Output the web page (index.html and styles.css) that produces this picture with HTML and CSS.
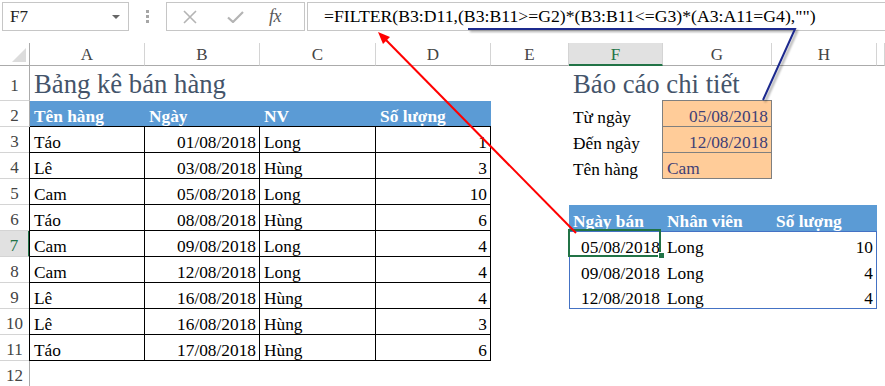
FILE: index.html
```html
<!DOCTYPE html>
<html lang="vi">
<head>
<meta charset="utf-8">
<title>FILTER</title>
<link rel="stylesheet" href="styles.css">
</head>
<body>
<div class="app">
  <div class="fbar">
    <div class="namebox"><span>F7</span><span class="caret"></span></div>
    <div class="dots"><i></i><i></i><i></i></div>
    <div class="fxbox">
      <svg class="ic-x" width="14" height="14" viewBox="0 0 14 14"><path d="M1 1L13 13M13 1L1 13" stroke="#b4b4b4" stroke-width="1.6" fill="none"/></svg>
      <svg class="ic-ok" width="17" height="12" viewBox="0 0 17 12"><path d="M1 6.5L6 11L16 1" stroke="#b4b4b4" stroke-width="2.2" fill="none"/></svg>
      <span class="fx">fx</span>
    </div>
    <div class="finput">=FILTER(B3:D11,(B3:B11&gt;=G2)*(B3:B11&lt;=G3)*(A3:A11=G4),"")</div>
  </div>
  <div class="sheet">
    <div class="ch corner"></div><div class="ch">A</div><div class="ch">B</div><div class="ch">C</div><div class="ch">D</div><div class="ch">E</div><div class="ch sel">F</div><div class="ch">G</div><div class="ch">H</div><div class="ch"></div>

    <div class="rh">1</div><div class="c title">Bảng kê bán hàng</div><div class="c"></div><div class="c"></div><div class="c"></div><div class="c"></div><div class="c title">Báo cáo chi tiết</div><div class="c"></div><div class="c"></div><div class="c"></div>

    <div class="rh">2</div><div class="c hd bb">Tên hàng</div><div class="c hd bb">Ngày</div><div class="c hd bb">NV</div><div class="c hd bb">Số lượng</div><div class="c"></div><div class="c">Từ ngày</div><div class="c inp top r">05/08/2018</div><div class="c"></div><div class="c"></div>

    <div class="rh">3</div><div class="c td first">Táo</div><div class="c td r">01/08/2018</div><div class="c td">Long</div><div class="c td r">1</div><div class="c"></div><div class="c">Đến ngày</div><div class="c inp r">12/08/2018</div><div class="c"></div><div class="c"></div>

    <div class="rh">4</div><div class="c td first">Lê</div><div class="c td r">03/08/2018</div><div class="c td">Hùng</div><div class="c td r">3</div><div class="c"></div><div class="c">Tên hàng</div><div class="c inp">Cam</div><div class="c"></div><div class="c"></div>

    <div class="rh">5</div><div class="c td first">Cam</div><div class="c td r">05/08/2018</div><div class="c td">Long</div><div class="c td r">10</div><div class="c"></div><div class="c"></div><div class="c"></div><div class="c"></div><div class="c"></div>

    <div class="rh">6</div><div class="c td first">Táo</div><div class="c td r">08/08/2018</div><div class="c td">Hùng</div><div class="c td r">6</div><div class="c"></div><div class="c hd">Ngày bán</div><div class="c hd">Nhân viên</div><div class="c hd">Số lượng</div><div class="c"></div>

    <div class="rh sel">7</div><div class="c td first">Cam</div><div class="c td r">09/08/2018</div><div class="c td">Long</div><div class="c td r">4</div><div class="c"></div><div class="c ob-t ob-l r">05/08/2018</div><div class="c ob-t">Long</div><div class="c ob-t ob-r r">10</div><div class="c"></div>

    <div class="rh">8</div><div class="c td first">Cam</div><div class="c td r">12/08/2018</div><div class="c td">Long</div><div class="c td r">4</div><div class="c"></div><div class="c ob-l r">09/08/2018</div><div class="c">Long</div><div class="c ob-r r">4</div><div class="c"></div>

    <div class="rh">9</div><div class="c td first">Lê</div><div class="c td r">16/08/2018</div><div class="c td">Hùng</div><div class="c td r">4</div><div class="c"></div><div class="c ob-l ob-b r">12/08/2018</div><div class="c ob-b">Long</div><div class="c ob-b ob-r r">4</div><div class="c"></div>

    <div class="rh">10</div><div class="c td first">Lê</div><div class="c td r">16/08/2018</div><div class="c td">Hùng</div><div class="c td r">3</div><div class="c"></div><div class="c"></div><div class="c"></div><div class="c"></div><div class="c"></div>

    <div class="rh">11</div><div class="c td first">Táo</div><div class="c td r">17/08/2018</div><div class="c td">Hùng</div><div class="c td r">6</div><div class="c"></div><div class="c"></div><div class="c"></div><div class="c"></div><div class="c"></div>

    <div class="rh">12</div><div class="c"></div><div class="c"></div><div class="c"></div><div class="c"></div><div class="c"></div><div class="c"></div><div class="c"></div><div class="c"></div><div class="c"></div>
  </div>

  <div class="selbox"></div>
  <div class="handle"></div>

  <svg class="arrows" width="885" height="386" viewBox="0 0 885 386">
    <defs>
      <filter id="sh" x="-10%" y="-10%" width="120%" height="130%">
        <feDropShadow dx="2" dy="2" stdDeviation="1.2" flood-color="#000" flood-opacity="0.35"/>
      </filter>
    </defs>
    <polyline points="468,29 795,29 763,100" fill="none" stroke="#1f2a8e" stroke-width="2" filter="url(#sh)"/>
    <line x1="576" y1="233" x2="385" y2="39" stroke="#ff0000" stroke-width="2"/>
    <polygon points="378,32 390,37 383,44" fill="#ff0000"/>
  </svg>
</div>
</body>
</html>
```
FILE: styles.css
```css
* { box-sizing: border-box; margin: 0; padding: 0; }
body {
  width: 885px; height: 386px; overflow: hidden; background: #fff;
  font-family: "Liberation Serif", Tinos, "Times New Roman", "DejaVu Serif", serif; color: #000;
}
.app { position: relative; width: 885px; height: 386px; font-family: "Liberation Serif", Tinos, "DejaVu Serif", serif; }

/* formula bar */
.fbar { height: 43px; display: flex; align-items: flex-start; padding-top: 2px; }
.namebox {
  margin-left: 2px; width: 127px; height: 29px; border: 1px solid #c6c6c6;
  display: flex; align-items: center; justify-content: space-between;
  padding: 0 8px 0 7px; font-size: 17px; color: #222;
}
.caret {
  width: 0; height: 0; border-left: 4px solid transparent;
  border-right: 4px solid transparent; border-top: 4px solid #666;
}
.dots { margin-left: 17px; margin-top: 8px; width: 3px; display: flex; flex-direction: column; gap: 2px; }
.dots i { display: block; width: 3px; height: 3px; background: #a6a6a6; }
.fxbox {
  margin-left: 17px; width: 139px; height: 29px; border: 1px solid #c6c6c6;
  display: flex; align-items: center; padding-left: 16px;
}
.ic-ok { margin-left: 30px; }
.fx { margin-left: 25px; font-style: italic; font-size: 18px; color: #595959; letter-spacing: -0.5px; }
.finput {
  margin-left: 2px; flex: 1; height: 29px; border: 1px solid #c6c6c6; border-right: none;
  padding-left: 16px; font-size: 17.7px; display: flex; align-items: center; white-space: nowrap;
}

/* sheet */
.sheet {
  display: grid;
  grid-template-columns: 30px 115px 115px 116px 115px 78px 94px 109px 105px 8px;
  grid-template-rows: 23px 35px repeat(11, 26px);
}
.ch {
  border-right: 1px solid #d4d4d4; border-bottom: 1px solid #ababab;
  display: flex; align-items: center; justify-content: center;
  font-size: 17px; line-height: 1; color: #444; padding-top: 1px;
}
.ch.sel { background: #e1e1e1; color: #217346; border-bottom: 2px solid #217346; }
.corner { position: relative; border-right-color: #ababab; }
.corner::after {
  content: ""; position: absolute; right: 3px; bottom: 3px; width: 0; height: 0;
  border-left: 14px solid transparent; border-bottom: 14px solid #dcdcdc;
}
.rh {
  border-right: 1px solid #ababab; border-bottom: 1px solid #d4d4d4;
  display: flex; align-items: center; justify-content: center;
  font-size: 17px; line-height: 1; color: #444; padding-top: 4px;
}
.rh.sel { background: #e1e1e1; color: #217346; border-right: 2px solid #217346; }

.c {
  display: flex; align-items: flex-end; white-space: nowrap; min-width: 0;
  font-size: 17.33px; line-height: 1; padding: 0 3px 1px 4px;
}
.c.r { justify-content: flex-end; }
.title { font-size: 26.7px; color: #44546a; padding-bottom: 3px; }
.hd { background: #5b9bd5; color: #fff; font-weight: bold; }
.bb { border-bottom: 1px solid #000; }
.td { border-right: 1px solid #000; border-bottom: 1px solid #000; }
.td.first { box-shadow: -1px 0 0 #000; }

.inp {
  background: #ffcc99; color: #3f3f76;
  border-right: 1px solid #7f7f7f; border-bottom: 1px solid #7f7f7f;
  box-shadow: -1px 0 0 #7f7f7f;
}
.inp.top { box-shadow: -1px 0 0 #7f7f7f, 0 -1px 0 #7f7f7f, -1px -1px 0 #7f7f7f; }

.ob-t { border-top: 1px solid #4472c4; }
.ob-l { border-left: 1px solid #4472c4; }
.ob-r { border-right: 1px solid #4472c4; }
.ob-b { border-bottom: 1px solid #4472c4; }

/* overlays */
.selbox {
  position: absolute; left: 568px; top: 229px; width: 93px; height: 28px;
  border: 2px solid #217346;
}
.handle {
  position: absolute; left: 658px; top: 252px; width: 7px; height: 7px;
  background: #217346; border: 1px solid #fff;
}
.arrows { position: absolute; left: 0; top: 0; pointer-events: none; }
```
